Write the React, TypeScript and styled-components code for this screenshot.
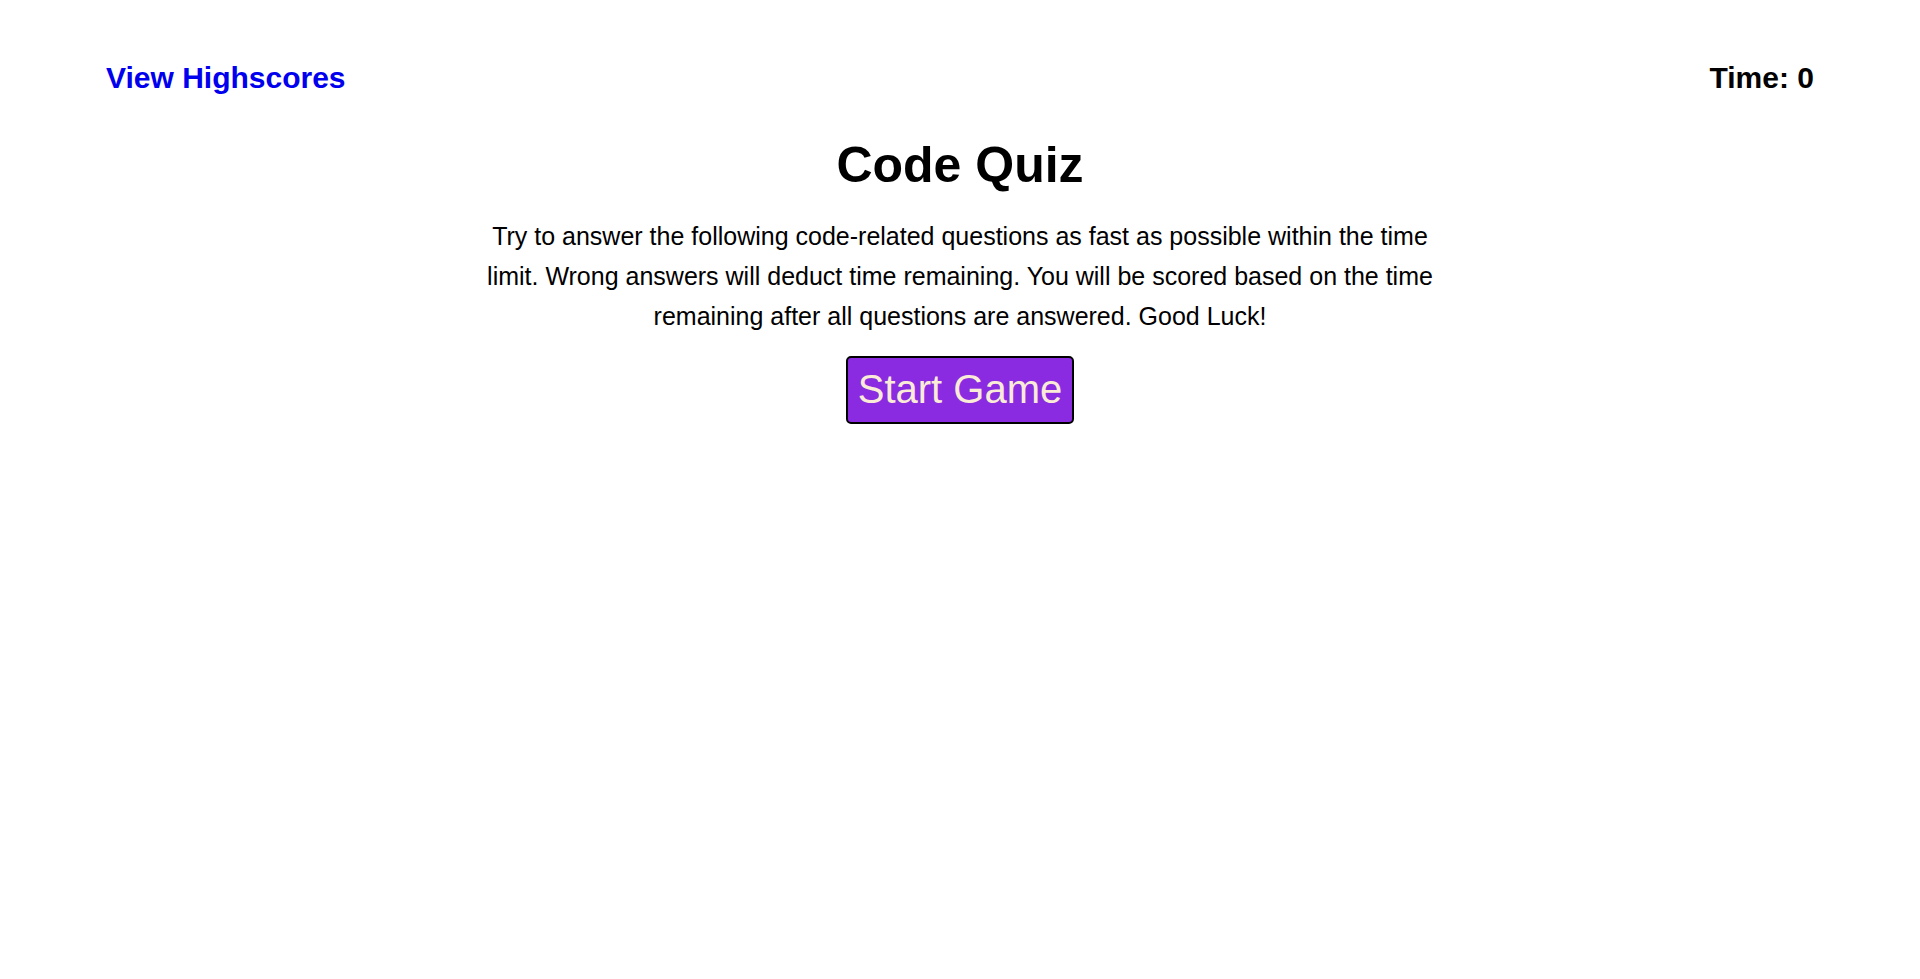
import React from "react";
import styled, { createGlobalStyle } from "styled-components";

const GlobalStyle = createGlobalStyle`
  html, body {
    margin: 0;
    padding: 0;
    background: #ffffff;
  }
  body {
    font-family: "Liberation Sans", Arial, sans-serif;
    color: #000000;
  }
`;

const Page = styled.div`
  display: flex;
  flex-direction: column;
  min-height: 979px;
`;

const Header = styled.header`
  display: flex;
  justify-content: space-between;
  align-items: center;
  padding: 61px 106px 0 106px;
`;

const HighscoresLink = styled.a`
  font-size: 30px;
  font-weight: 700;
  color: #0000ee;
  text-decoration: none;
  cursor: pointer;
`;

const Timer = styled.div`
  font-size: 30px;
  font-weight: 700;
`;

const Main = styled.main`
  display: flex;
  flex-direction: column;
  align-items: center;
  margin-top: 41px;
`;

const Title = styled.h1`
  margin: 0;
  font-size: 50px;
  font-weight: 700;
`;

const Intro = styled.p`
  margin: 22px 0 0;
  width: 970px;
  font-size: 25px;
  line-height: 40px;
  text-align: center;
`;

const StartButton = styled.button`
  margin-top: 20px;
  padding: 8px 10px 9px;
  font-family: "Liberation Sans", Arial, sans-serif;
  font-size: 40px;
  line-height: 47px;
  color: #faebd7;
  background: #8a2be2;
  border: 2px solid #000000;
  border-radius: 5px;
  cursor: pointer;
`;

export default function App() {
  return (
    <>
      <GlobalStyle />
      <Page>
        <Header>
          <HighscoresLink>View Highscores</HighscoresLink>
          <Timer>Time: 0</Timer>
        </Header>
        <Main>
          <Title>Code Quiz</Title>
          <Intro>
            Try to answer the following code-related questions as fast as possible within the time
            limit. Wrong answers will deduct time remaining. You will be scored based on the time
            remaining after all questions are answered. Good Luck!
          </Intro>
          <StartButton>Start Game</StartButton>
        </Main>
      </Page>
    </>
  );
}
